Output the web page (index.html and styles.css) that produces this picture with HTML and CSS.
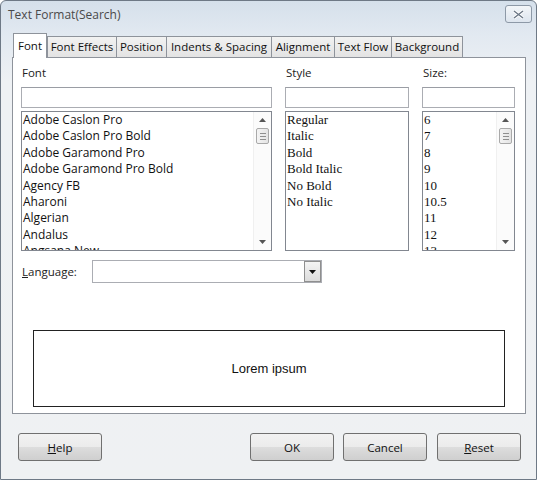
FILE: index.html
```html
<!DOCTYPE html>
<html lang="en">
<head>
    <meta charset="UTF-8">
    <title>Text Format(Search)</title>
    <link rel="stylesheet" href="styles.css">
</head>
<body>
    <div class="window">
        <div class="titlebar">
            <span class="title">Text Format(Search)</span>
            <span class="close">
                <svg width="11" height="9" viewBox="0 0 11 9"><path d="M1 1 L10 8 M10 1 L1 8" stroke="#fff" stroke-width="3"/><path d="M1 1 L10 8 M10 1 L1 8" stroke="#6b7786" stroke-width="1.4"/></svg>
            </span>
        </div>
        <div class="client">
            <div class="tabs">
                <div class="tab active" style="width:34px">Font</div>
                <div class="tab" style="width:70px">Font Effects</div>
                <div class="tab" style="width:51px">Position</div>
                <div class="tab" style="width:106px">Indents &amp; Spacing</div>
                <div class="tab" style="width:64px">Alignment</div>
                <div class="tab" style="width:58px">Text Flow</div>
                <div class="tab" style="width:72px">Background</div>
            </div>
            <div class="panel">
                <div class="columns">
                    <div class="col col-font">
                        <div class="label">Font</div>
                        <div class="entry"></div>
                        <div class="listbox">
                            <div class="items sans">
                                <div>Adobe Caslon Pro</div>
                                <div>Adobe Caslon Pro Bold</div>
                                <div>Adobe Garamond Pro</div>
                                <div>Adobe Garamond Pro Bold</div>
                                <div>Agency FB</div>
                                <div>Aharoni</div>
                                <div>Algerian</div>
                                <div>Andalus</div>
                                <div>Angsana New</div>
                            </div>
                            <div class="scrollbar">
                                <svg class="arrow" width="7" height="4" viewBox="0 0 7 4"><path d="M0 4 L3.5 0 L7 4 Z" fill="#555"/></svg>
                                <div class="thumb"><i></i><i></i><i></i></div>
                                <div class="track"></div>
                                <svg class="arrow" width="7" height="4" viewBox="0 0 7 4"><path d="M0 0 L7 0 L3.5 4 Z" fill="#555"/></svg>
                            </div>
                        </div>
                    </div>
                    <div class="col col-style">
                        <div class="label">Style</div>
                        <div class="entry"></div>
                        <div class="listbox">
                            <div class="items serif">
                                <div>Regular</div>
                                <div>Italic</div>
                                <div>Bold</div>
                                <div>Bold Italic</div>
                                <div>No Bold</div>
                                <div>No Italic</div>
                            </div>
                        </div>
                    </div>
                    <div class="col col-size">
                        <div class="label">Size:</div>
                        <div class="entry"></div>
                        <div class="listbox">
                            <div class="items serif">
                                <div>6</div>
                                <div>7</div>
                                <div>8</div>
                                <div>9</div>
                                <div>10</div>
                                <div>10.5</div>
                                <div>11</div>
                                <div>12</div>
                                <div>13</div>
                            </div>
                            <div class="scrollbar">
                                <svg class="arrow" width="7" height="4" viewBox="0 0 7 4"><path d="M0 4 L3.5 0 L7 4 Z" fill="#555"/></svg>
                                <div class="thumb"><i></i><i></i><i></i></div>
                                <div class="track"></div>
                                <svg class="arrow" width="7" height="4" viewBox="0 0 7 4"><path d="M0 0 L7 0 L3.5 4 Z" fill="#555"/></svg>
                            </div>
                        </div>
                    </div>
                </div>

                <div class="lang-row">
                    <span class="lang-label"><u>L</u>anguage:</span>
                    <div class="combo">
                        <div class="combo-btn">
                            <svg width="7" height="4" viewBox="0 0 7 4"><path d="M0 0 L7 0 L3.5 4 Z" fill="#111"/></svg>
                        </div>
                    </div>
                </div>

                <div class="preview">Lorem ipsum</div>
            </div>

            <div class="buttons">
                <button class="btn btn-help"><u>H</u>elp</button>
                <div class="spacer"></div>
                <button class="btn">OK</button>
                <button class="btn">Cancel</button>
                <button class="btn btn-reset"><u>R</u>eset</button>
            </div>
        </div>
    </div>
</body>
</html>
```

FILE: styles.css
```css
body {
    margin: 0;
    font-family: "Open Sans", sans-serif;
    font-size: 11.5px;
    color: #1e1e1e;
    background: #fff;
}
.window {
    width: 537px;
    height: 480px;
    box-sizing: border-box;
    border: 1px solid #6e7986;
    border-radius: 6px 6px 0 0;
    background: linear-gradient(#d5e0eb 0, #e2e9f1 34px, #eef1f4 80px, #eff1f3 100%);
    display: flex;
    flex-direction: column;
}
.titlebar {
    height: 29px;
    display: flex;
    align-items: flex-start;
    justify-content: space-between;
    padding: 0 4px 0 7px;
}
.title {
    margin-top: 5px;
    font-size: 12px;
    color: #4a4a4a;
}
.close {
    margin-top: 4px;
    width: 25px;
    height: 16px;
    border: 1px solid #8d99a7;
    border-radius: 3px;
    background: linear-gradient(#f3f6f9, #dde5ee);
    display: flex;
    align-items: center;
    justify-content: center;
}
.client {
    flex: 1;
    padding: 0 10px 0 11px;
    display: flex;
    flex-direction: column;
}
.tabs {
    display: flex;
    align-items: flex-end;
    height: 27px;
    padding-left: 1px;
}
.tab {
    box-sizing: border-box;
    height: 21px;
    border: 1px solid #8e939b;
    border-bottom: none;
    margin-left: -1px;
    background: linear-gradient(#f2f2f2, #e3e3e3);
    text-align: center;
    line-height: 19px;
    white-space: nowrap;
    font-size: 11.5px;
    color: #111;
}
.tab:first-child {
    margin-left: 0;
}
.tab.active {
    background: #fff;
    line-height: 24px;
    position: relative;
    z-index: 1;
    margin-bottom: -1px;
    height: 25px;
    margin-right: 1px;
}
.panel {
    height: 357px;
    box-sizing: border-box;
    border: 1px solid #8e939b;
    background: #fff;
    padding: 7px 9px 0 8px;
}
.columns {
    display: flex;
    gap: 13px;
}
.col-font { width: 251px; }
.col-style { width: 124px; }
.col-size { width: 93px; }
.label {
    height: 16px;
    line-height: 16px;
    margin-bottom: 6px;
    padding-left: 1px;
    color: #222;
}
.entry {
    height: 21px;
    box-sizing: border-box;
    border: 1px solid #abadb3;
    border-top-color: #9a9da4;
    background: #fff;
}
.listbox {
    margin-top: 3px;
    height: 140px;
    box-sizing: border-box;
    border: 1px solid #828790;
    display: flex;
    overflow: hidden;
}
.items {
    flex: 1;
    padding-left: 1px;
    overflow: hidden;
}
.items div {
    height: 16.4px;
    line-height: 16.4px;
    white-space: nowrap;
}
.items.sans {
    font-size: 12px;
    color: #111;
}
.items.serif {
    font-family: "Liberation Serif", serif;
    font-size: 13px;
    color: #111;
}
.scrollbar {
    width: 17px;
    background: #fbfbfb;
    border-left: 1px solid #f0f0f0;
    display: flex;
    flex-direction: column;
    align-items: center;
}
.scrollbar .arrow {
    margin: 6px 0 6px;
}
.scrollbar .track {
    flex: 1;
}
.thumb {
    width: 13px;
    height: 16px;
    box-sizing: border-box;
    border: 1px solid #a9a9a9;
    border-radius: 2px;
    background: linear-gradient(90deg, #f4f4f4, #e4e4e4);
    display: flex;
    flex-direction: column;
    justify-content: center;
    align-items: center;
    gap: 2px;
}
.thumb i {
    display: block;
    width: 6px;
    height: 1px;
    background: #8f8f8f;
}
.lang-row {
    display: flex;
    align-items: center;
    margin-top: 9px;
    height: 23px;
}
.lang-label {
    width: 70px;
    padding-left: 1px;
    color: #222;
}
.combo {
    width: 230px;
    height: 23px;
    box-sizing: border-box;
    border: 1px solid #abadb3;
    display: flex;
    justify-content: flex-end;
}
.combo-btn {
    width: 17px;
    height: 21px;
    box-sizing: border-box;
    border: 1px solid #8f8f8f;
    background: linear-gradient(#f4f4f4, #dcdcdc);
    display: flex;
    align-items: center;
    justify-content: center;
}
.preview {
    margin: 47px 11px 0 12px;
    height: 77px;
    box-sizing: border-box;
    border: 1px solid #222;
    display: flex;
    align-items: center;
    justify-content: center;
    font-family: "Liberation Sans", Arial, sans-serif;
    font-size: 13px;
    color: #111;
}
.buttons {
    display: flex;
    gap: 9px;
    margin-top: 19px;
    padding: 0 5px 0 6px;
}
.spacer {
    flex: 1;
}
.btn {
    width: 84px;
    height: 28px;
    border: 1px solid #707070;
    border-radius: 3px;
    background: linear-gradient(#f2f2f2 0, #ebebeb 50%, #dddddd 50%, #cfcfcf 100%);
    font-family: "Open Sans", sans-serif;
    font-size: 11.5px;
    color: #111;
    padding: 0;
}
.btn-reset {
    margin-left: 1px;
}
```
